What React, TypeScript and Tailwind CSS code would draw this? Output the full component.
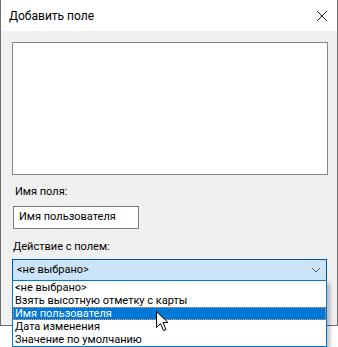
function Cursor() {
  return (
    <svg width="13" height="21" viewBox="0 0 13 21" className="absolute left-[156px] top-[311px]">
      <path
        d="M0.5 0.5 L0.5 16.5 L4.5 12.5 L7.5 19.5 L10 18.5 L7 11.5 L12 11.5 Z"
        fill="white"
        stroke="black"
        strokeWidth="1"
        strokeLinejoin="miter"
      />
    </svg>
  )
}

const items = [
  '<не выбрано>',
  'Взять высотную отметку с карты',
  'Имя пользователя',
  'Дата изменения',
  'Значение по умолчанию',
]

export default function App() {
  return (
    <div className="relative w-[338px] h-[347px] bg-white overflow-hidden text-[11px] text-black [font-family:Roboto,'Liberation_Sans',sans-serif]">
      {/* Window */}
      <div className="w-[338px] h-[326px] flex flex-col border-x border-b border-[#6f6f6f]">
        {/* Title bar */}
        <div className="h-[31px] bg-white flex items-center justify-between pl-2 pr-[9px]">
          <span className="text-[12px] leading-none pt-[1px]">Добавить поле</span>
          <svg width="12" height="12" viewBox="0 0 12 12" className="mt-[1px]">
            <path d="M1 1 L11 11 M11 1 L1 11" stroke="#1a1a1a" strokeWidth="1" />
          </svg>
        </div>

        {/* Body */}
        <div className="flex-1 bg-[#f0f0f0] pl-[11px] pr-[9px] pt-[11px] flex flex-col">
          <div className="h-[133px] bg-white border border-[#828790]" />

          <div className="mt-[9px] pl-[3px] leading-[16px]">Имя поля:</div>

          <div className="mt-[6px] ml-[1px] w-[126px] h-[23px] bg-white border border-[#7a7a7a] flex items-center pl-[5px]">
            Имя пользователя
          </div>

          <div className="mt-[10px] pl-[1px] leading-[16px]">Действие с полем:</div>

          <div className="mt-[4px] w-[315px] h-[22px] bg-[#cce4f7] border border-[#005499] flex items-center justify-between pl-[4px] pr-[5px]">
            <span>&lt;не выбрано&gt;</span>
            <svg width="10" height="6" viewBox="0 0 10 6">
              <path d="M1 1 L5 5 L9 1" fill="none" stroke="#5f5f5f" strokeWidth="1" />
            </svg>
          </div>
        </div>
      </div>

      {/* Dropdown list */}
      <div className="absolute left-[12px] top-[280px] w-[315px] h-[67px] bg-white border border-[#0078d7] shadow-[3px_3px_4px_rgba(0,0,0,0.25)] flex flex-col">
        {items.map((item, i) => (
          <div
            key={item}
            className={
              i === 2
                ? 'h-[13px] leading-[11px] pl-[1px] bg-[#0078d7] text-white border border-dotted border-[#f2a05a]'
                : 'h-[13px] leading-[13px] pl-[2px]'
            }
          >
            {item}
          </div>
        ))}
      </div>

      <Cursor />
    </div>
  )
}
